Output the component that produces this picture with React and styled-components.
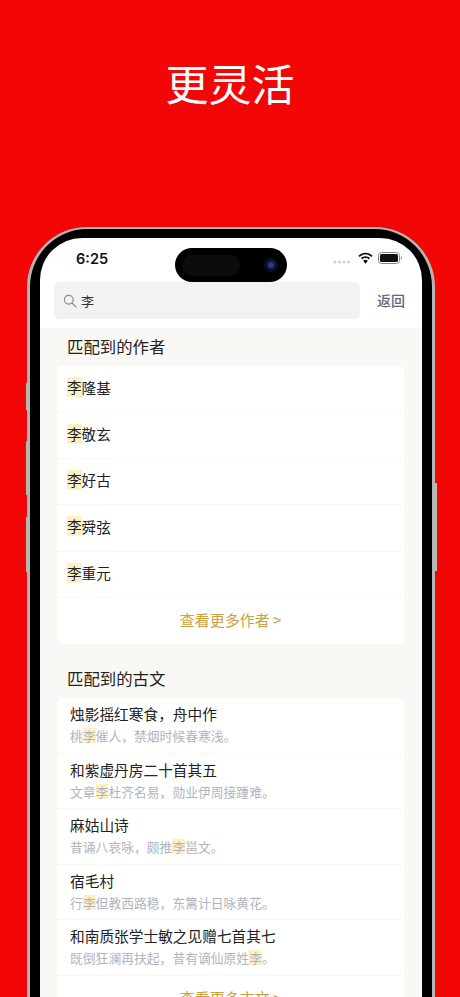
import React from "react";
import styled, { createGlobalStyle } from "styled-components";

const Global = createGlobalStyle`
  html, body { margin: 0; padding: 0; background: #f30606; }
  body { font-family: "Noto Sans CJK SC", "Noto Sans", sans-serif; }
`;

const Page = styled.div`
  width: 460px;
  height: 997px;
  overflow: hidden;
  background: #f30606;
  display: flex;
  flex-direction: column;
  align-items: center;
`;

const Headline = styled.h1`
  margin: 55px 0 0;
  height: 54px;
  line-height: 54px;
  font-size: 43px;
  font-weight: 400;
  color: #fff;
  text-align: center;
`;

const Phone = styled.div`
  position: relative;
  flex: none;
  margin: 118px 0 0 2px;
  width: 408px;
  height: 830px;
  box-sizing: border-box;
  border-radius: 60px;
  background: #000;
  border: 3px solid #b4b6b4;
  border-top-width: 2px;
  padding: 9px 10px 0;
`;

const SideKey = styled.div`
  position: absolute;
  ${(p) => (p.$side === "left" ? "left: -4.5px;" : "right: -4.5px;")}
  top: ${(p) => p.$top}px;
  width: 1.5px;
  height: ${(p) => p.$h}px;
  background: #b8b9b8;
`;

const Screen = styled.div`
  height: 100%;
  border-radius: 42px 42px 0 0;
  background: #fff;
  overflow: hidden;
  display: flex;
  flex-direction: column;
`;

const Island = styled.div`
  position: absolute;
  left: 145px;
  top: 19px;
  width: 112px;
  height: 34px;
  border-radius: 17px;
  background: #000;
  display: flex;
  align-items: center;
  padding: 0 9px 0 7px;
  box-sizing: border-box;
  justify-content: space-between;
`;

const IslandPill = styled.div`
  width: 58px;
  height: 21px;
  border-radius: 11px;
  background: #0c0c0c;
`;

const Lens = styled.div`
  width: 14px;
  height: 14px;
  border-radius: 50%;
  background: radial-gradient(circle, #2a3a8c 0 20%, #10122c 42%, #08080f 100%);
`;

const StatusBar = styled.div`
  flex: none;
  height: 44px;
  display: flex;
  align-items: flex-start;
  justify-content: space-between;
  padding: 11px 20px 0 36px;
  box-sizing: border-box;
`;

const Clock = styled.span`
  font-family: "Inter", "Liberation Sans", sans-serif;
  font-size: 14.5px;
  line-height: 19px;
  font-weight: 600;
  color: #111;
`;

const StatusIcons = styled.div`
  display: flex;
  align-items: flex-start;
  gap: 5px;
  margin-top: 3px;
`;

const DotsSvg = styled.svg`
  margin: 8px 2px 0 0;
`;

const SearchRow = styled.div`
  flex: none;
  height: 46px;
  display: flex;
  align-items: flex-start;
  padding: 0 17px 0 14px;
  box-sizing: border-box;
  justify-content: space-between;
`;

const SearchBox = styled.div`
  width: 306px;
  height: 37px;
  border-radius: 5px;
  background: #f2f2f2;
  display: flex;
  align-items: center;
  gap: 4px;
  padding-left: 9px;
  box-sizing: border-box;
`;

const SearchText = styled.span`
  font-size: 13px;
  color: #333;
`;

const Back = styled.span`
  font-size: 14px;
  line-height: 37px;
  font-weight: 500;
  color: #5d6778;
`;

const Content = styled.div`
  flex: 1;
  min-height: 0;
  background: #f9f8f4;
  padding: 0 18px 0 17px;
`;

const SectionTitle = styled.div`
  height: ${(p) => p.$h}px;
  box-sizing: border-box;
  padding-left: 10px;
  padding-top: ${(p) => p.$top}px;
  font-size: 16.4px;
  line-height: 24px;
  color: #222;
`;

const Card = styled.div`
  background: #fff;
  border-radius: 5px;
  overflow: hidden;
`;

const AuthorRow = styled.div`
  height: 46.4px;
  box-sizing: border-box;
  display: flex;
  align-items: center;
  padding: 0 0 3px 10px;
  font-size: 14.6px;
  color: #222;
  border-bottom: 1px solid #f8f7f4;
`;

const Mark = styled.span`
  background: #fdf0c2;
  display: inline-block;
  line-height: ${(p) => p.$h}px;
`;

const PoemRow = styled.div`
  height: 55.6px;
  box-sizing: border-box;
  padding: 6px 0 0 13px;
  border-bottom: 1px solid #f8f7f4;
`;

const PoemTitle = styled.div`
  font-size: 14.7px;
  line-height: 20px;
  color: #222;
`;

const PoemLine = styled.div`
  font-size: 12.8px;
  line-height: 20px;
  margin-top: 2px;
  color: #b1b4bc;
`;

const More = styled.div`
  height: 46px;
  display: flex;
  align-items: center;
  justify-content: center;
  padding-bottom: 2px;
  box-sizing: border-box;
  font-size: 15px;
  color: #c9a144;
`;

const SearchIcon = () => (
  <svg width="14" height="14" viewBox="0 0 16 16" fill="none" stroke="#8a8a8a" strokeWidth="1.3" strokeLinecap="round">
    <circle cx="6.6" cy="6.6" r="5" />
    <path d="M10.3 10.3 L14.8 14.8" />
  </svg>
);

const Wifi = () => (
  <svg width="15" height="13" viewBox="0 0 15 12" fill="#111">
    <path d="M7.5 0.3C4.8 0.3 2.3 1.4 0.4 3.2L1.6 4.5C3.2 3 5.2 2.1 7.5 2.1C9.8 2.1 11.8 3 13.4 4.5L14.6 3.2C12.7 1.4 10.2 0.3 7.5 0.3Z" />
    <path d="M7.5 3.8C5.8 3.8 4.2 4.5 3 5.6L4.2 6.9C5.1 6.1 6.2 5.6 7.5 5.6C8.8 5.6 9.9 6.1 10.8 6.9L12 5.6C10.8 4.5 9.2 3.8 7.5 3.8Z" />
    <path d="M7.5 7.3C6.6 7.3 5.8 7.6 5.2 8.2L7.5 11.3L9.8 8.2C9.2 7.6 8.4 7.3 7.5 7.3Z" />
  </svg>
);

const Battery = () => (
  <svg width="24" height="12" viewBox="0 0 24 12">
    <rect x="0.5" y="0.5" width="21" height="11" rx="3" fill="none" stroke="#888" />
    <rect x="2" y="2" width="18" height="8" rx="1.6" fill="#111" />
    <path d="M22.8 4 C23.6 4.3 23.9 5 23.9 6 C23.9 7 23.6 7.7 22.8 8 Z" fill="#999" />
  </svg>
);

const Dots = () => (
  <DotsSvg width="18" height="4" viewBox="0 0 18 4" fill="#d0d0d0">
    <circle cx="2" cy="2" r="1.5" />
    <circle cx="6.5" cy="2" r="1.5" />
    <circle cx="11" cy="2" r="1.5" />
    <circle cx="15.5" cy="2" r="1.5" />
  </DotsSvg>
);

const authors = ["隆基", "敬玄", "好古", "舜弦", "重元"];
const poems = [
  ["烛影摇红寒食，舟中作", "桃", "催人，禁烟时候春寒浅。"],
  ["和紫虚丹房二十首其五", "文章", "杜齐名易，勋业伊周接踵难。"],
  ["麻姑山诗", "昔诵八哀咏，颇推", "邕文。"],
  ["宿毛村", "行", "但教西路稳，东篱计日咏黄花。"],
  ["和南质张学士敏之见赠七首其七", "既倒狂澜再扶起，昔有谪仙原姓", "。"],
];

export default function App() {
  return (
    <Page>
      <Global />
      <Headline>更灵活</Headline>
      <Phone>
        <SideKey $side="left" $top={154} $h={27} />
        <SideKey $side="left" $top={212} $h={54} />
        <SideKey $side="left" $top={288} $h={55} />
        <SideKey $side="right" $top={254} $h={88} />
        <Island>
          <IslandPill />
          <Lens />
        </Island>
        <Screen>
          <StatusBar>
            <Clock>6:25</Clock>
            <StatusIcons>
              <Dots />
              <Wifi />
              <Battery />
            </StatusIcons>
          </StatusBar>
          <SearchRow>
            <SearchBox>
              <SearchIcon />
              <SearchText>李</SearchText>
            </SearchBox>
            <Back>返回</Back>
          </SearchRow>
          <Content>
            <SectionTitle $h={38} $top={6}>匹配到的作者</SectionTitle>
            <Card>
              {authors.map((a) => (
                <AuthorRow key={a}>
                  <Mark $h={20}>李</Mark>
                  {a}
                </AuthorRow>
              ))}
              <More>查看更多作者 &gt;</More>
            </Card>
            <SectionTitle $h={54} $top={22}>匹配到的古文</SectionTitle>
            <Card>
              {poems.map(([title, before, after]) => (
                <PoemRow key={title}>
                  <PoemTitle>{title}</PoemTitle>
                  <PoemLine>
                    {before}
                    <Mark $h={15}>李</Mark>
                    {after}
                  </PoemLine>
                </PoemRow>
              ))}
              <More>查看更多古文 &gt;</More>
            </Card>
          </Content>
        </Screen>
      </Phone>
    </Page>
  );
}
